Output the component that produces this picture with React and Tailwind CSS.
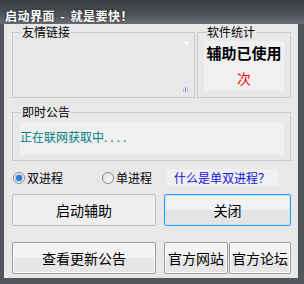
export default function App() {
  return (
    <div className="w-[304px] h-[284px] bg-[#52565c] flex flex-col font-['Noto_Sans_CJK_SC','Liberation_Sans',sans-serif] select-none">
      {/* Title bar */}
      <div className="h-[24px] shrink-0 bg-linear-to-b from-[#3a3e43] via-[#4a4e54] to-[#6a6e74] px-[5px] pt-[2px]">
        <span className="text-white font-bold text-[12px] leading-[14px] tracking-[0.5px] [text-shadow:0_0_3px_rgba(0,0,0,0.6)]">
          启动界面 <span className="mx-[2px]">-</span> 就是要快！
        </span>
      </div>

      {/* Client area */}
      <div className="flex-1 ml-[4px] mr-[6px] mb-[6px] bg-[#e8e8e8] pl-[8px] pr-[7px] pt-[2px] flex flex-col text-black">
        {/* Top groups */}
        <div className="flex gap-[2px] h-[72px]">
          <fieldset className="w-[183px] h-[72px] border border-[#c9c9c9] flex flex-col">
            <legend className="ml-[8px] px-[1px] text-[12px] leading-[12px]">友情链接</legend>
            <div className="flex-1 flex flex-col justify-between items-end pr-[6px] pt-[3px] pb-[5px]">
              <div className="w-0 h-0 border-l-[5px] border-l-transparent border-t-[5px] border-t-white" />
              <div className="flex items-end gap-[1px]">
                <div className="w-[1px] h-[3px] bg-[#b8b8e8]" />
                <div className="w-[1px] h-[5px] bg-[#8a8ad8]" />
                <div className="w-[1px] h-[4px] bg-[#b8b8e8]" />
              </div>
            </div>
          </fieldset>
          <fieldset className="w-[94px] h-[72px] border border-[#c9c9c9]">
            <legend className="ml-[8px] px-[1px] text-[12px] leading-[12px]">软件统计</legend>
            <div className="mx-[6px] mt-[3px] h-[49px] bg-[#f0f0f0] flex flex-col items-center pt-[4px]">
              <span className="text-[15px] leading-[16px] font-bold">辅助已使用</span>
              <span className="mt-[10px] text-[14px] leading-[15px] text-[#ff0000]">次</span>
            </div>
          </fieldset>
        </div>

        {/* Announcement */}
        <fieldset className="mt-[8px] h-[55px] border border-[#c9c9c9]">
          <legend className="ml-[8px] px-[1px] text-[12px] leading-[12px]">即时公告</legend>
          <div className="ml-[7px] mr-[6px] mt-[4px] h-[32px] bg-[#f0f0f0] pt-[1px]">
            <span className="text-[12px] leading-[12px] text-[#008080]">
              正在联网获取中<span className="tracking-[3px]">....</span>
            </span>
          </div>
        </fieldset>

        {/* Radio row */}
        <div className="mt-[8px] h-[17px] flex items-center text-[12px] leading-[12px]">
          <label className="ml-[1px] flex items-center gap-[2px]">
            <span className="w-[12px] h-[12px] rounded-full border border-[#8a8a8a] bg-[#f4f4f4] flex items-center justify-center">
              <span className="w-[6px] h-[6px] rounded-full bg-[#2b7fd8] shadow-[0_0_0_1px_#9cc6ee]" />
            </span>
            双进程
          </label>
          <label className="ml-[39px] flex items-center gap-[2px]">
            <span className="w-[12px] h-[12px] rounded-full border border-[#8a8a8a] bg-linear-to-br from-[#e0e0e0] to-[#fbfbfb]" />
            单进程
          </label>
          <div className="ml-[14px] w-[112px] h-[17px] bg-[#f0f0f0] flex items-center pl-[8px] text-[#1010e0]">
            什么是单双进程？
          </div>
        </div>

        {/* Buttons row 1 */}
        <div className="mt-[8px] h-[32px] flex">
          <button className="w-[144px] h-[32px] rounded-[2px] border border-[#c0c0c0] bg-[#eeeeee] text-[14px] leading-[14px]">
            启动辅助
          </button>
          <button className="ml-auto w-[127px] h-[32px] rounded-[2px] border border-[#3399ff] bg-linear-to-b from-[#f2f2f2] from-50% to-[#e4e4e4] to-50% shadow-[inset_0_0_0_1px_#c9e3fb] text-[14px] leading-[14px]">
            关闭
          </button>
        </div>

        {/* Buttons row 2 */}
        <div className="mt-[16px] h-[32px] flex gap-[1px]">
          <button className="w-[144px] h-[32px] rounded-[2px] border border-[#9a9a9a] bg-linear-to-b from-[#f3f3f3] from-50% to-[#e6e6e6] to-50% shadow-[inset_0_0_0_1px_#fcfcfc] text-[14px] leading-[14px]">
            查看更新公告
          </button>
          <button className="ml-auto w-[64px] h-[32px] rounded-[2px] border border-[#9a9a9a] bg-linear-to-b from-[#f3f3f3] from-50% to-[#e6e6e6] to-50% shadow-[inset_0_0_0_1px_#fcfcfc] text-[14px] leading-[14px]">
            官方网站
          </button>
          <button className="w-[62px] h-[32px] rounded-[2px] border border-[#9a9a9a] bg-linear-to-b from-[#f3f3f3] from-50% to-[#e6e6e6] to-50% shadow-[inset_0_0_0_1px_#fcfcfc] text-[14px] leading-[14px]">
            官方论坛
          </button>
        </div>
      </div>
    </div>
  )
}
